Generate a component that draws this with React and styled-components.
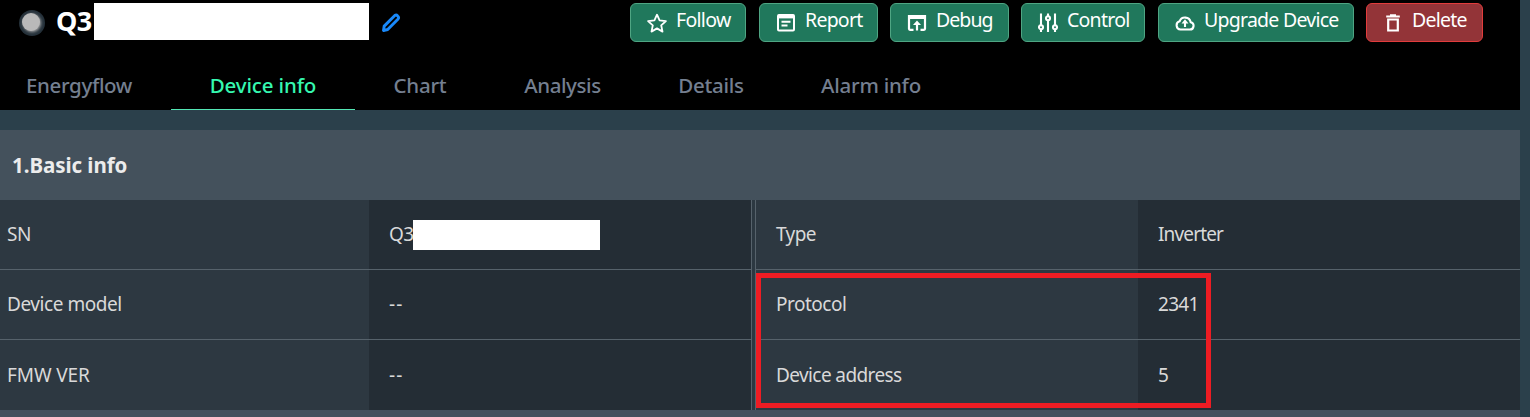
import React from "react";
import styled, { createGlobalStyle } from "styled-components";

const GlobalStyle = createGlobalStyle`
  * { box-sizing: border-box; }
  body {
    margin: 0;
    background: #2b404b;
    font-family: "Noto Sans", "Open Sans", sans-serif;
    color: #d9d9d9;
    overflow: hidden;
  }
`;

const Page = styled.div`
  width: 1520px;
  height: 417px;
  display: flex;
  flex-direction: column;
`;

const Header = styled.header`
  height: 110px;
  flex: none;
  display: flex;
  flex-direction: column;
  justify-content: space-between;
  background: #000;
`;

const TitleBar = styled.div`
  display: flex;
  justify-content: space-between;
  align-items: flex-start;
  padding: 3px 37px 0 19px;
`;

const TitleGroup = styled.div`
  display: flex;
  align-items: center;
  height: 37px;
`;

const StatusLamp = styled.span`
  width: 26px;
  height: 26px;
  margin: 3px 12px 0 0;
  padding: 3px;
  border-radius: 50%;
  background: #25313a;
  &::after {
    content: "";
    display: block;
    width: 18px;
    height: 18px;
    border-radius: 50%;
    background: #b9b9b9;
    box-shadow: 1px 1px 3px #aaa;
  }
`;

const Title = styled.h1`
  margin: -2px 0 0;
  width: 37px;
  font-size: 27px;
  line-height: 36px;
  font-weight: 700;
  letter-spacing: -0.6px;
  text-indent: -1px;
  color: #fff;
`;

const Redaction = styled.span`
  flex: none;
  width: ${(p) => p.$w}px;
  height: ${(p) => p.$h}px;
  background: #fff;
`;

const EditIcon = styled.svg`
  width: 20px;
  height: 20px;
  margin: 3px 0 0 12px;
`;

const Actions = styled.div`
  display: flex;
  gap: 12px;
`;

const ActionButton = styled.button`
  display: flex;
  align-items: center;
  gap: 9px;
  width: ${(p) => p.$w}px;
  margin-left: ${(p) => p.$shift || 0}px;
  height: 39px;
  padding: 0 0 0 16px;
  border: 1px solid ${(p) => (p.$danger ? "#e23c3c" : "#4fa583")};
  border-radius: 6px;
  background: ${(p) => (p.$danger ? "#933438" : "#20785c")};
  color: #fff;
  font: 400 19.5px/28px "Noto Sans", sans-serif;
  letter-spacing: ${(p) => p.$ls}px;
  white-space: nowrap;
  svg { flex: none; width: 20px; height: 20px; margin-top: 0; }
  span { margin-top: -5px; }
`;

const Tabs = styled.nav`
  display: flex;
  height: 49px;
`;

const Tab = styled.a`
  flex: none;
  width: ${(p) => p.$w}px;
  margin-right: ${(p) => p.$gap || 0}px;
  border-bottom: 1px solid ${(p) => (p.$active ? "#53e6b4" : "transparent")};
  color: ${(p) => (p.$active ? "#35f8b0" : "#747f90")};
  font-size: 20.5px;
  line-height: 49px;
  font-weight: 500;
  letter-spacing: ${(p) => p.$ls}px;
  text-align: center;
  white-space: nowrap;
`;

const SectionTitle = styled.h2`
  flex: none;
  height: 70px;
  margin: 20px 0 0;
  padding-left: 12px;
  background: #44515c;
  color: #ececec;
  font-size: 20.5px;
  font-weight: 700;
  line-height: 70px;
  letter-spacing: -0.05px;
`;

const Tables = styled.div`
  flex: none;
  position: relative;
  display: flex;
  gap: 3px;
  height: 210px;
  background: #2c3841;
`;

const Column = styled.div`
  flex: none;
  width: ${(p) => p.$w}px;
  border: 0 solid #56626b;
  border-right-width: ${(p) => (p.$left ? 1 : 0)}px;
  border-left-width: ${(p) => (p.$left ? 0 : 1)}px;
`;

const Row = styled.div`
  display: grid;
  grid-template-columns: ${(p) => p.$label}px 382px;
  height: 70px;
`;

const Cell = styled.div`
  display: flex;
  align-items: center;
  padding: 0 0 ${(p) => (p.$last ? 1 : 2)}px ${(p) => p.$pad}px;
  background: ${(p) => (p.$label ? "#2d3841" : "#242d35")};
  border-bottom: ${(p) => (p.$last ? 0 : 1)}px solid #56626b;
  font-size: 19px;
  letter-spacing: ${(p) => p.$ls || 0}px;
  white-space: nowrap;
`;

const HiddenSerial = styled(Redaction)`
  margin: 2px 0 0 -1px;
`;

const Highlight = styled.div`
  position: absolute;
  left: 756px;
  top: 73px;
  width: 455px;
  height: 135px;
  border: 5px solid #ee1c23;
`;

const NextSection = styled.div`
  flex: 1;
  background: #44515c;
`;

const Icon = ({ children, w = 1.8 }) => (
  <svg viewBox="0 0 20 20" fill="none" stroke="#fff" strokeWidth={w}>
    {children}
  </svg>
);

const icons = {
  star: (
    <Icon w={1.8}>
      <path
        strokeLinejoin="round"
        d="M10 1.700l2.600 5.700 6.300.7-4.700 4.200 1.300 6.300-5.500-3.200-5.500 3.200 1.300-6.300L1.100 8.100l6.300-.7z"
      />
    </Icon>
  ),
  report: (
    <Icon w={2}>
      <rect x="2" y="2" width="16" height="15.500" rx="1" />
      <path d="M2 3.600h16" strokeWidth="3.600" />
      <path d="M5.500 8.800h9M5.500 12.400h6" />
    </Icon>
  ),
  debug: (
    <Icon w={2.200}>
      <path d="M6.500 16.800H3a1 1 0 0 1-1-1V3h16v12.800a1 1 0 0 1-1 1h-3.500" />
      <path d="M2 4h16" strokeWidth="4" />
      <path d="M10 17.500V10" />
      <path d="M10 7.500l4 4.500H6z" fill="#fff" stroke="none" />
    </Icon>
  ),
  control: (
    <Icon w={2.100}>
      <path d="M3 .5V12M3 16.500V19M10 .5V3M10 7.500V19M17 .5V12M17 16.500V19" />
      <circle cx="3" cy="14.200" r="2" />
      <circle cx="10" cy="5.200" r="2" />
      <circle cx="17" cy="14.200" r="2" />
    </Icon>
  ),
  cloud: (
    <Icon w={2.100}>
      <path d="M5.500 16.500h9.300a3.700 3.700 0 0 0 .9-7.300A5.800 5.800 0 0 0 4.600 8.300a4.200 4.200 0 0 0 .9 8.200z" />
      <path d="M10 14V9" />
      <path d="M10 6.200l3.500 4.300h-7z" fill="#fff" stroke="none" />
    </Icon>
  ),
  trash: (
    <Icon w={2.200}>
      <path d="M3.200 3.500h13.600M7 2.300h6M5.200 6.500v11h9.600v-11z" />
    </Icon>
  ),
};

const actions = [
  { label: "Follow", icon: "star", w: 116, ls: -0.7 },
  { label: "Report", icon: "report", w: 119, ls: -0.75, shift: 1 },
  { label: "Debug", icon: "debug", w: 119, ls: -0.95 },
  { label: "Control", icon: "control", w: 124, ls: -0.75 },
  { label: "Upgrade Device", icon: "cloud", w: 196, ls: -0.75, shift: 1 },
  { label: "Delete", icon: "trash", w: 117, ls: -0.75, danger: true },
];

const tabs = [
  { label: "Energyflow", w: 158, gap: 13, ls: -0.35 },
  { label: "Device info", w: 184, active: true, ls: -0.15 },
  { label: "Chart", w: 130, ls: -0.25 },
  { label: "Analysis", w: 155, ls: -0.4 },
  { label: "Details", w: 142, ls: -0.3 },
  { label: "Alarm info", w: 178, ls: -0.25 },
];

const leftRows = [
  { label: "SN", value: "Q3", hidden: true, ls: -0.5 },
  { label: "Device model", value: "--", ls: -0.45, vls: 1.2 },
  { label: "FMW VER", value: "--", ls: -0.1, vls: 1.2 },
];

const rightRows = [
  { label: "Type", value: "Inverter", ls: -0.6, vls: -0.85 },
  { label: "Protocol", value: "2341", ls: -0.5, vls: -0.7 },
  { label: "Device address", value: "5", ls: -0.6 },
];

function InfoRow({ row, left, last }) {
  return (
    <Row $label={left ? 369 : 382}>
      <Cell $label $last={last} $pad={left ? 7 : 20} $ls={row.ls}>
        {row.label}
      </Cell>
      <Cell $last={last} $pad={20} $ls={row.vls ?? -0.5}>
        {row.value}
        {row.hidden && <HiddenSerial $w={187} $h={30} />}
      </Cell>
    </Row>
  );
}

export default function App() {
  return (
    <Page>
      <GlobalStyle />
      <Header>
        <TitleBar>
          <TitleGroup>
            <StatusLamp />
            <Title>Q3</Title>
            <Redaction $w={275} $h={37} />
            <EditIcon viewBox="0 0 20 20" fill="none" stroke="#1989fa" strokeWidth="2.900" strokeLinejoin="round">
              <path d="M2.500 17.500l.7-4.400L13.800 2.500q1.500-1 2.900.5 1.500 1.500.4 2.900L6.700 16.500z" />
            </EditIcon>
          </TitleGroup>
          <Actions>
            {actions.map((a) => (
              <ActionButton key={a.label} $w={a.w} $ls={a.ls} $shift={a.shift} $danger={a.danger}>
                {icons[a.icon]}
                <span>{a.label}</span>
              </ActionButton>
            ))}
          </Actions>
        </TitleBar>
        <Tabs>
          {tabs.map((t) => (
            <Tab key={t.label} $w={t.w} $gap={t.gap} $ls={t.ls} $active={t.active}>
              {t.label}
            </Tab>
          ))}
        </Tabs>
      </Header>
      <SectionTitle>1.Basic info</SectionTitle>
      <Tables>
        <Column $w={752} $left>
          {leftRows.map((r, i) => (
            <InfoRow key={r.label} row={r} left last={i === 2} />
          ))}
        </Column>
        <Column $w={765}>
          {rightRows.map((r, i) => (
            <InfoRow key={r.label} row={r} last={i === 2} />
          ))}
        </Column>
        <Highlight />
      </Tables>
      <NextSection />
    </Page>
  );
}
